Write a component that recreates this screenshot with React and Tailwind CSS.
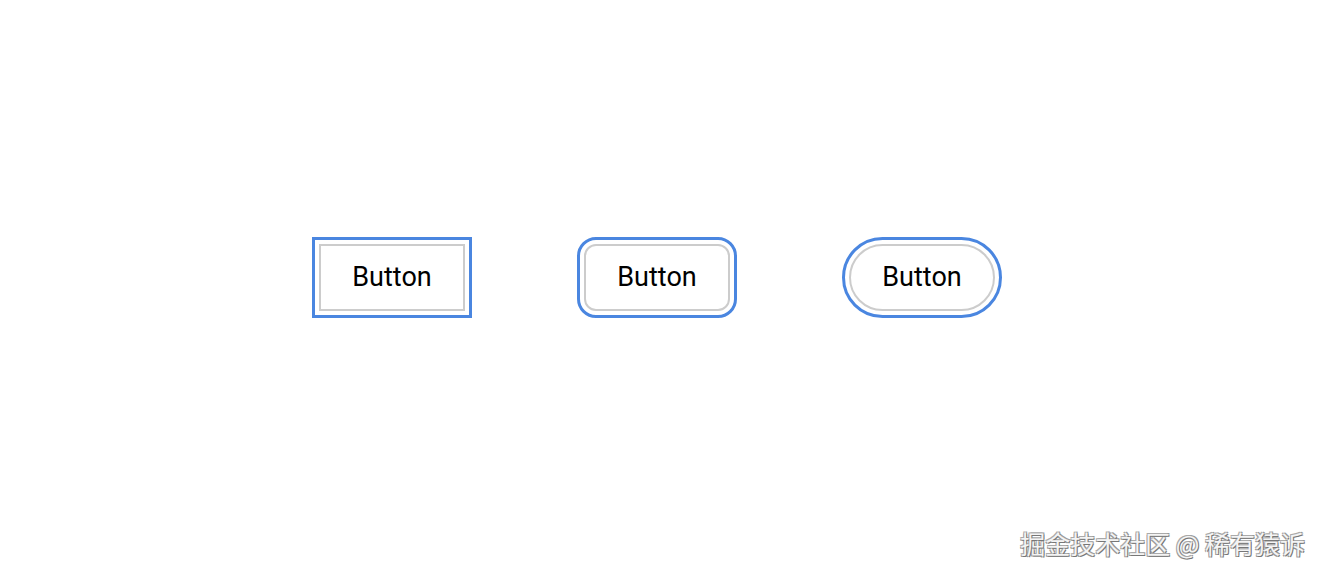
import React from 'react';

const App = () => {
    return (
        <div className="relative w-[1322px] h-[574px] bg-white overflow-hidden">
            {/* Buttons row */}
            <div className="h-full flex items-center justify-center gap-[119px] pr-[8px] pb-[20px]">
                <button className="w-[146px] h-[67px] bg-white border-2 border-[#cccccc] outline-[3px] outline-solid outline-[#4a86e0] outline-offset-[4px] text-[27px] text-black font-['Roboto',sans-serif] rounded-none">
                    Button
                </button>
                <button className="w-[146px] h-[67px] bg-white border-2 border-[#cccccc] outline-[3px] outline-solid outline-[#4a86e0] outline-offset-[4px] text-[27px] text-black font-['Roboto',sans-serif] rounded-[12px]">
                    Button
                </button>
                <button className="w-[146px] h-[67px] bg-white border-2 border-[#cccccc] outline-[3px] outline-solid outline-[#4a86e0] outline-offset-[4px] text-[27px] text-black font-['Roboto',sans-serif] rounded-full">
                    Button
                </button>
            </div>

            {/* Watermark */}
            <div className="absolute right-[17px] bottom-[18px] text-[25px] leading-none text-[#f4f4f4] font-['Noto_Sans_CJK_SC',sans-serif] [text-shadow:1px_1px_0_#777,-1px_-1px_0_#aaa,1px_-1px_0_#999,-1px_1px_0_#999]">
                掘金技术社区 @ 稀有猿诉
            </div>
        </div>
    );
};

export default App;
